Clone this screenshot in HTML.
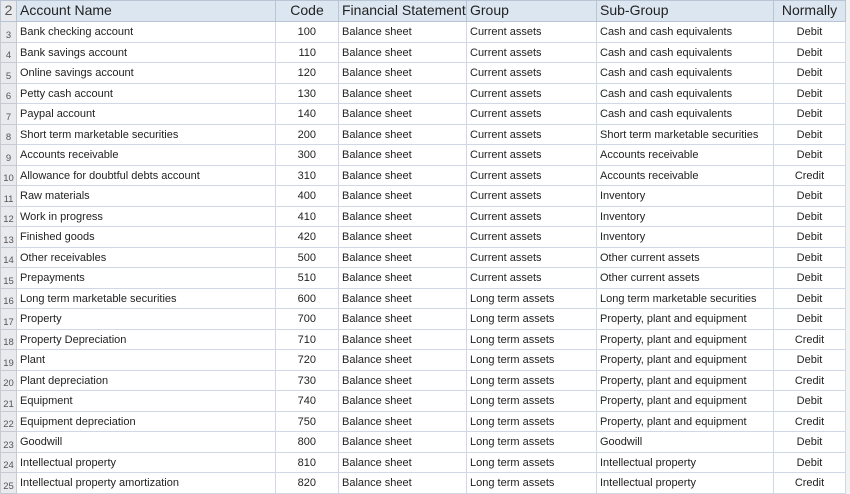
<!DOCTYPE html><html><head><style>
body{margin:0;width:850px;height:485px;overflow:hidden;background:#f3f3f3;font-family:"Liberation Sans",sans-serif;color:#222}
table{border-collapse:collapse;position:absolute;left:0;top:0;table-layout:fixed;background:#fff;width:845px}
td{border:1px solid #d0d7e5;height:19.5px;padding:2px 3px 0;font-size:11px;white-space:nowrap;overflow:hidden;line-height:17.5px;box-sizing:border-box}
td.n{background:#e8eaee;color:#555;font-size:9.5px;padding:0 1px;text-align:center;vertical-align:bottom;line-height:12px;border-color:#c5cad3}
tr.h td{background:#dce6f1;font-size:14px;height:21px;line-height:18px;padding-top:0;vertical-align:top;border-color:#b9c4d4}
tr.h td.n{background:#e8eaee}
.c{text-align:center}.r{text-align:right;padding-right:22px}
</style></head><body>
<table>
<colgroup><col style="width:16px"><col style="width:259px"><col style="width:63px"><col style="width:128px"><col style="width:130px"><col style="width:177px"><col style="width:72px"></colgroup>
<tr class="h"><td class="n">2</td><td>Account Name</td><td class="c">Code</td><td>Financial Statement</td><td>Group</td><td>Sub-Group</td><td class="c">Normally</td></tr>
<tr><td class="n">3</td><td>Bank checking account</td><td class="r">100</td><td>Balance sheet</td><td>Current assets</td><td>Cash and cash equivalents</td><td class="c">Debit</td></tr>
<tr><td class="n">4</td><td>Bank savings account</td><td class="r">110</td><td>Balance sheet</td><td>Current assets</td><td>Cash and cash equivalents</td><td class="c">Debit</td></tr>
<tr><td class="n">5</td><td>Online savings account</td><td class="r">120</td><td>Balance sheet</td><td>Current assets</td><td>Cash and cash equivalents</td><td class="c">Debit</td></tr>
<tr><td class="n">6</td><td>Petty cash account</td><td class="r">130</td><td>Balance sheet</td><td>Current assets</td><td>Cash and cash equivalents</td><td class="c">Debit</td></tr>
<tr><td class="n">7</td><td>Paypal account</td><td class="r">140</td><td>Balance sheet</td><td>Current assets</td><td>Cash and cash equivalents</td><td class="c">Debit</td></tr>
<tr><td class="n">8</td><td>Short term marketable securities</td><td class="r">200</td><td>Balance sheet</td><td>Current assets</td><td>Short term marketable securities</td><td class="c">Debit</td></tr>
<tr><td class="n">9</td><td>Accounts receivable</td><td class="r">300</td><td>Balance sheet</td><td>Current assets</td><td>Accounts receivable</td><td class="c">Debit</td></tr>
<tr><td class="n">10</td><td>Allowance for doubtful debts account</td><td class="r">310</td><td>Balance sheet</td><td>Current assets</td><td>Accounts receivable</td><td class="c">Credit</td></tr>
<tr><td class="n">11</td><td>Raw materials</td><td class="r">400</td><td>Balance sheet</td><td>Current assets</td><td>Inventory</td><td class="c">Debit</td></tr>
<tr><td class="n">12</td><td>Work in progress</td><td class="r">410</td><td>Balance sheet</td><td>Current assets</td><td>Inventory</td><td class="c">Debit</td></tr>
<tr><td class="n">13</td><td>Finished goods</td><td class="r">420</td><td>Balance sheet</td><td>Current assets</td><td>Inventory</td><td class="c">Debit</td></tr>
<tr><td class="n">14</td><td>Other receivables</td><td class="r">500</td><td>Balance sheet</td><td>Current assets</td><td>Other current assets</td><td class="c">Debit</td></tr>
<tr><td class="n">15</td><td>Prepayments</td><td class="r">510</td><td>Balance sheet</td><td>Current assets</td><td>Other current assets</td><td class="c">Debit</td></tr>
<tr><td class="n">16</td><td>Long term marketable securities</td><td class="r">600</td><td>Balance sheet</td><td>Long term assets</td><td>Long term marketable securities</td><td class="c">Debit</td></tr>
<tr><td class="n">17</td><td>Property</td><td class="r">700</td><td>Balance sheet</td><td>Long term assets</td><td>Property, plant and equipment</td><td class="c">Debit</td></tr>
<tr><td class="n">18</td><td>Property Depreciation</td><td class="r">710</td><td>Balance sheet</td><td>Long term assets</td><td>Property, plant and equipment</td><td class="c">Credit</td></tr>
<tr><td class="n">19</td><td>Plant</td><td class="r">720</td><td>Balance sheet</td><td>Long term assets</td><td>Property, plant and equipment</td><td class="c">Debit</td></tr>
<tr><td class="n">20</td><td>Plant depreciation</td><td class="r">730</td><td>Balance sheet</td><td>Long term assets</td><td>Property, plant and equipment</td><td class="c">Credit</td></tr>
<tr><td class="n">21</td><td>Equipment</td><td class="r">740</td><td>Balance sheet</td><td>Long term assets</td><td>Property, plant and equipment</td><td class="c">Debit</td></tr>
<tr><td class="n">22</td><td>Equipment depreciation</td><td class="r">750</td><td>Balance sheet</td><td>Long term assets</td><td>Property, plant and equipment</td><td class="c">Credit</td></tr>
<tr><td class="n">23</td><td>Goodwill</td><td class="r">800</td><td>Balance sheet</td><td>Long term assets</td><td>Goodwill</td><td class="c">Debit</td></tr>
<tr><td class="n">24</td><td>Intellectual property</td><td class="r">810</td><td>Balance sheet</td><td>Long term assets</td><td>Intellectual property</td><td class="c">Debit</td></tr>
<tr><td class="n">25</td><td>Intellectual property amortization</td><td class="r">820</td><td>Balance sheet</td><td>Long term assets</td><td>Intellectual property</td><td class="c">Credit</td></tr>
</table>
</body></html>
